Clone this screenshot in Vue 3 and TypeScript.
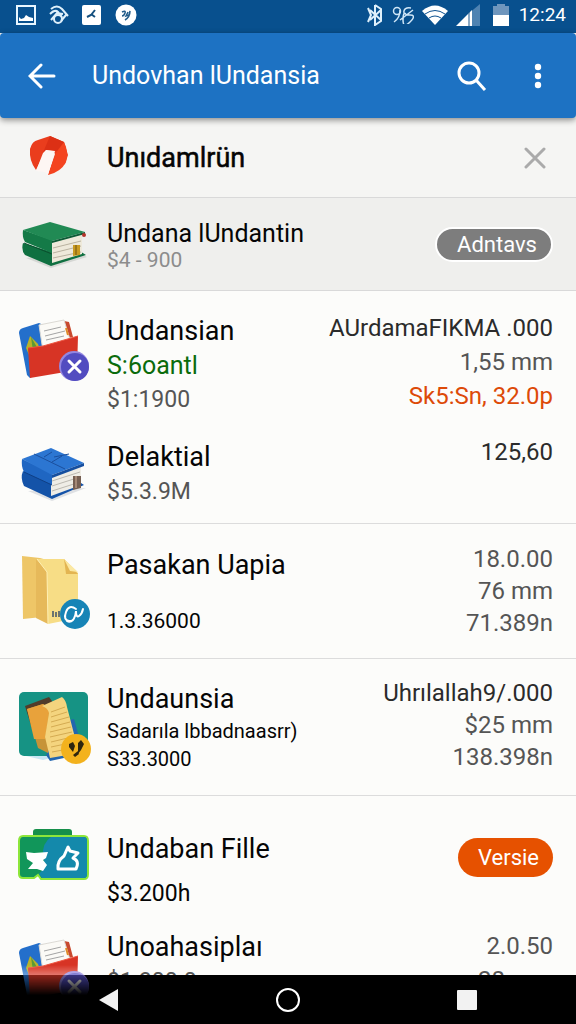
<script setup lang="ts">
interface Line {
  text: string
  tone: string
}
interface Entry {
  id: string
  icon: string
  title: string
  lines: Line[]
  values: Line[]
  action?: string
}

const entries: Entry[] = [
  {
    id: 'files',
    icon: 'files',
    title: 'Undansian',
    lines: [
      { text: 'S:6oantl', tone: 'green' },
      { text: '$1:1900', tone: 'grey' },
    ],
    values: [
      { text: 'AUrdamaFIKMA .000', tone: 'dark' },
      { text: '1,55 mm', tone: 'grey' },
      { text: 'Sk5:Sn, 32.0p', tone: 'orange' },
    ],
  },
  {
    id: 'book',
    icon: 'book',
    title: 'Delaktial',
    lines: [{ text: '$5.3.9M', tone: 'grey' }],
    values: [{ text: '125,60', tone: 'dark' }],
  },
  {
    id: 'folder',
    icon: 'folder',
    title: 'Pasakan Uapia',
    lines: [{ text: '1.3.36000', tone: 'black' }],
    values: [
      { text: '18.0.00', tone: 'grey' },
      { text: '76 mm', tone: 'grey' },
      { text: '71.389n', tone: 'grey' },
    ],
  },
  {
    id: 'notes',
    icon: 'notes',
    title: 'Undaunsia',
    lines: [
      { text: 'Sadarıla lbbadnaasrr)', tone: 'black' },
      { text: 'S33.3000', tone: 'black' },
    ],
    values: [
      { text: 'Uhrılallah9/.000', tone: 'dark' },
      { text: '$25 mm', tone: 'grey' },
      { text: '138.398n', tone: 'grey' },
    ],
  },
  {
    id: 'case',
    icon: 'case',
    title: 'Undaban Fille',
    lines: [{ text: '$3.200h', tone: 'black' }],
    values: [],
    action: 'Versie',
  },
  {
    id: 'last',
    icon: 'files',
    title: 'Unoahasiplaı',
    lines: [{ text: '$1.300.0', tone: 'grey' }],
    values: [
      { text: '2.0.50', tone: 'grey' },
      { text: '28 mm', tone: 'grey' },
    ],
  },
]
</script>

<template>
  <div class="screen">
    <div class="status">
      <svg class="glyph" width="20" height="20" viewBox="0 0 20 20">
        <rect x="1" y="1" width="18" height="18" fill="none" stroke="#e8f6ff" stroke-width="2" />
        <path d="M3 16v-4l2 2 3-1 2-3 3 2 4 1v3z" fill="#fff" />
      </svg>
      <svg class="glyph" width="20" height="20" viewBox="0 0 20 20" fill="none" stroke="#dff0fb" stroke-width="2">
        <path d="M2 4q6-5 11 0l6 7M1 9q5-5 8-2l4 5M2 15l6-7 6 1M12 16l5-6" />
        <circle cx="9" cy="14" r="4" />
      </svg>
      <svg class="glyph" width="20" height="20" viewBox="0 0 20 20">
        <rect width="19" height="20" rx="2" fill="#fff" />
        <path d="M5 12l4-2 4-5M9 9l4 3" fill="none" stroke="#15507f" stroke-width="2" />
      </svg>
      <svg class="glyph" width="22" height="22" viewBox="0 0 22 22">
        <circle cx="11" cy="11" r="10.500" fill="#fff" />
        <path d="M7 8q4-2 3 1t-3 3M13 8l-2 4 3-1 1-4q0 6-5 9" fill="none" stroke="#235d8b" stroke-width="1.500" />
      </svg>
      <span class="push"></span>
      <svg class="glyph" width="18" height="22" viewBox="0 0 18 22" fill="none" stroke="#dff0fb" stroke-width="2">
        <path d="M9 1v20l6-4V5L9 1M4 6l11 10M4 16L15 6M2 4l3 7-3 7" />
      </svg>
      <svg class="glyph" width="22" height="18" viewBox="0 0 22 18" fill="none" stroke="#cfe6f7" stroke-width="1.500">
        <circle cx="5" cy="5" r="3.500" />
        <path d="M8 4Q8 12 2 16M19 2q-6-1-7 3t6 4 0 7-7-2 3-6M21 4L8 14" />
      </svg>
      <svg class="glyph" width="26" height="20" viewBox="0 0 26 20">
        <path d="M0 6Q13-5 26 6L13 20z" fill="#fff" />
        <path d="M3 9q10-7 20 0M7 13q6-4 12 0" fill="none" stroke="#0d5190" stroke-width="1" />
      </svg>
      <svg class="glyph" width="24" height="22" viewBox="0 0 24 22">
        <path d="M12 10L24 0v22H12z" fill="#4f83b2" />
        <path d="M0 22L16 6v16z" fill="#fff" />
        <path d="M13 8v14" stroke="#17548c" stroke-width="1" />
      </svg>
      <svg class="glyph battery" width="16" height="22" viewBox="0 0 16 22">
        <path d="M0 2h4V0h8v2h4v9H0z" fill="#6f96bd" />
        <path d="M0 11h16v11H0z" fill="#fff" />
      </svg>
      <span class="clock">12:24</span>
    </div>

    <header class="bar">
      <button class="tap" aria-label="Back">
        <svg width="28" height="26" viewBox="0 0 28 26" fill="none" stroke="#fff" stroke-width="3" stroke-linecap="round">
          <path d="M13 2L2 13l11 11M3 13h23" />
        </svg>
      </button>
      <h1>Undovhan lUndansia</h1>
      <button class="tap" aria-label="Search">
        <svg width="30" height="30" viewBox="0 0 30 30" fill="none" stroke="#fff" stroke-width="3">
          <circle cx="12" cy="12" r="10" />
          <path d="M19 19l9 10" />
        </svg>
      </button>
      <button class="tap" aria-label="More">
        <svg width="8" height="26" viewBox="0 0 8 26" fill="#fff">
          <circle cx="4" cy="4" r="3.200" />
          <circle cx="4" cy="13" r="3.200" />
          <circle cx="4" cy="22" r="3.200" />
        </svg>
      </button>
    </header>

    <main>
      <section class="notice">
        <svg class="icon" viewBox="0 0 72 72">
          <path d="M12 27Q14 19 20 18L32 14 46 20 50 33 47 42 30 53 37 32 35 29 28 28 18 48Q11 39 12 27z" fill="#ea3d1d" />
          <path d="M46 20Q51 30 48 40 43 50 30 53L38 31z" fill="#f4441f" />
          <path d="M32 14L46 20 39 29 28 28 24 33z" fill="#dc3015" />
          <path d="M25 31L28 28 37 29 30 53 27 50 18 49z" fill="#fdf6f3" />
        </svg>
        <h2>Unıdamlrün</h2>
        <button class="close" aria-label="Close">
          <svg width="22" height="22" viewBox="0 0 22 22" stroke="#aaa" stroke-width="3" stroke-linecap="round">
            <path d="M2 2l18 18M20 2L2 20" />
          </svg>
        </button>
      </section>

      <section class="notice featured">
        <svg class="icon" viewBox="0 0 72 72">
          <path d="M8 50L33 60 69 49 60 44z" fill="#d5d7d4" />
          <path d="M5 35L34 44 60 42 68 47 33 58 7 47Q3 42 5 35z" fill="#0f7041" />
          <path d="M34 34L64 26V46L34 55z" fill="#eee9da" />
          <path d="M35 40l28-7M35 45l28-7M35 50l28-6" stroke="#b9b29f" stroke-width="1" />
          <path d="M5 22L34 32V45L7 34Q4 29 5 22z" fill="#147a47" />
          <path d="M6 35L34 46" stroke="#0a4f2d" stroke-width="1" />
          <path d="M5 22L32 14 67 24 34 33z" fill="#218a54" />
          <path d="M34 33L67 24v2L34 35z" fill="#0d5b36" />
          <circle cx="66" cy="27" r="2" fill="#b4332a" />
          <path d="M55 37h7v10l-7 1z" fill="#c99a20" />
          <path d="M58 37v10" stroke="#6f520f" stroke-width="1" />
        </svg>
        <div class="text">
          <h3>Undana lUndantin</h3>
          <p>$4 - 900</p>
        </div>
        <button class="pill muted">Adntavs</button>
      </section>

      <ul class="list">
        <li v-for="entry in entries" :key="entry.id" :class="['row', entry.id]">
          <svg v-if="entry.icon === 'files'" class="icon" viewBox="0 0 72 72">
            <path d="M1 24Q1 20 5 19L21 14 34 20 28 60 12 69 9 66z" fill="#246fcb" />
            <path d="M8 39L12 27 20 35 22 41 11 46z" fill="#b9b32a" />
            <path d="M13 28l7 12-5 2z" fill="#5a9a35" />
            <path d="M46 12L51 13 55 28 46 30z" fill="#c8492e" />
            <path d="M21 16L46 11 53 34 25 42z" fill="#fbfaf6" stroke="#dcdad4" stroke-width="1" />
            <path d="M26 22l17-4M27 27l20-5M28 31l18-4" stroke="#a4a4a4" stroke-width="1" />
            <path d="M48 19l2 7" stroke="#e08a28" stroke-width="2" />
            <path d="M10 39L25 37 60 27 59 61 12 69z" fill="#d73425" />
            <path d="M10 39L25 37 60 27" fill="none" stroke="#ee5540" stroke-width="1" />
            <circle cx="56" cy="57" r="15" fill="#9386e0" />
            <circle cx="57" cy="58" r="14" fill="#524cc0" />
            <path d="M51 52l11 11M62 52L51 63" stroke="#fff" stroke-width="3" stroke-linecap="round" />
          </svg>
          <svg v-else-if="entry.icon === 'book'" class="icon" viewBox="0 0 72 72">
            <path d="M10 56L34 66 68 53z" fill="#dfe1e4" />
            <path d="M5 36L33 48 60 46 66 50 34 64 6 51Q2 43 5 36z" fill="#1453a8" />
            <path d="M33 41L63 30V50L33 61z" fill="#efede6" />
            <path d="M34 46l28-9M34 51l28-9M34 56l28-9" stroke="#bcb9b1" stroke-width="1" />
            <path d="M4 24L34 38V50L6 37Q3 31 4 24z" fill="#1f66c2" />
            <path d="M6 37L34 50" stroke="#0f3f85" stroke-width="1" />
            <path d="M4 24L33 13 66 28 34 40z" fill="#2c76d2" />
            <path d="M16 19L47 34M26 22l8-5M36 22l15-3M34 27l10-6" stroke="#1b4f9d" stroke-width="1" fill="none" />
            <path d="M34 40L66 28v3L34 43z" fill="#164f9f" />
            <path d="M55 41h8v12l-8 2z" fill="#765f52" />
            <path d="M58 41v12" stroke="#d4b49b" stroke-width="1" />
          </svg>
          <svg v-else-if="entry.icon === 'folder'" class="icon" viewBox="0 0 72 72">
            <path d="M4 13L22 15 40 20 24 74 5 76z" fill="#eec667" />
            <path d="M18 16L30 29 30 81 18 75z" fill="#e6b95a" />
            <path d="M19 16H46L60 30V75L30 81 29 29z" fill="#f7dd86" />
            <path d="M19 16L29 29 30 81" fill="none" stroke="#fff0b4" stroke-width="1" />
            <path d="M46 16L60 31H48z" fill="#e3b552" />
            <path d="M46 16L60 29 52 28z" fill="#fbe8a3" />
            <path d="M35 68v6M38 69v5M41 68v6" stroke="#6b7470" stroke-width="2" />
            <circle cx="57" cy="71" r="15" fill="#1784b6" />
            <path d="M58 66Q51 61 48 69T51 78 58 68Q58 75 61 73T65 66M49 78q3 2 6-1" fill="none" stroke="#fff" stroke-width="2" stroke-linecap="round" />
          </svg>
          <svg v-else-if="entry.icon === 'notes'" class="icon" viewBox="0 0 72 72">
            <path d="M8 79H40L25 83z" fill="#c8e6f3" />
            <rect x="1" y="15" width="69" height="64" rx="5" fill="#169384" />
            <path d="M52 43L56 42 61 60 60 78 32 84 28 78z" fill="#2266b0" />
            <path d="M7 29L31 20 34 24 30 70 17 61z" fill="#513c2a" />
            <path d="M9 32L25 27 34 32 30 76 20 71z" fill="#c69338" />
            <path d="M9 32L25 27Q33 31 31 36L27 62 16 62z" fill="#e8a23b" />
            <path d="M24 29L44 20Q48 23 49 30L61 76 32 81 27 60 31 36Q30 31 24 29z" fill="#f4d47e" />
            <path d="M33 35l14-5M33 40l16-5M33 45l18-5M33 50l19-5M32 55l21-5M32 60l22-5M33 65l21-5M33 70l19-4M34 75l16-3" stroke="#d4ab52" stroke-width="1" />
            <circle cx="58" cy="72" r="15" fill="#f3b21d" />
            <path d="M51 67l4-2 2 4-2 6-4-5zM60 66l3-3 3 4-3 6-3 4zM55 78l5-4 1 3-4 3z" fill="#2e250f" />
          </svg>
          <svg v-else class="icon" viewBox="0 0 72 72">
            <rect x="15" y="2" width="39" height="18" rx="3" fill="#168f4a" />
            <path d="M5 9H66Q70 9 70 14V47Q70 52 66 52H23L20 48 16 51H5Q1 51 1 47V14Q1 9 5 9z" fill="#11965a" stroke="#8de63a" stroke-width="2" />
            <path d="M33 10H66Q69 10 69 14V47Q69 51 66 51H24L21 47Q29 40 25 29 24 16 33 10z" fill="#1489ab" />
            <path d="M8 25L16 26 30 25 28 31 25 33 29 38 25 44 19 42 10 42 15 36 9 32z" fill="#fff" />
            <path d="M50 20L46 29Q39 34 40 42H58Q62 34 55 31L60 26 52 24z" fill="none" stroke="#fff" stroke-width="3" stroke-linejoin="round" />
          </svg>

          <div class="text">
            <h3>{{ entry.title }}</h3>
            <p v-for="line in entry.lines" :key="line.text" :class="line.tone">{{ line.text }}</p>
          </div>
          <div v-if="entry.values.length" class="values">
            <p v-for="value in entry.values" :key="value.text" :class="value.tone">{{ value.text }}</p>
          </div>
          <button v-if="entry.action" class="pill">{{ entry.action }}</button>
        </li>
      </ul>
    </main>

    <nav class="nav">
      <button class="tap" aria-label="Back">
        <svg width="20" height="22" viewBox="0 0 20 22"><path d="M19 0v22L0 11z" fill="#f2f2f2" /></svg>
      </button>
      <button class="tap" aria-label="Home">
        <svg width="24" height="24" viewBox="0 0 24 24"><circle cx="12" cy="12" r="11" fill="none" stroke="#fff" stroke-width="2" /></svg>
      </button>
      <button class="tap" aria-label="Recent">
        <svg width="20" height="20" viewBox="0 0 20 20"><rect width="20" height="20" rx="1" fill="#f2f2f2" /></svg>
      </button>
    </nav>
  </div>
</template>

<style>
body {
  margin: 0;
}
</style>

<style scoped>
.screen {
  height: 100vh;
  overflow: hidden;
  display: flex;
  flex-direction: column;
  background: #fcfcfa;
  color: #050505;
  font-family: Roboto, "Liberation Sans", sans-serif;
}
h1, h2, h3, p, ul {
  margin: 0;
  padding: 0;
  font-weight: 400;
}
button {
  margin: 0;
  padding: 0;
  border: 0;
  background: none;
  font: inherit;
  color: inherit;
}
svg {
  display: block;
}
.status {
  flex: none;
  display: flex;
  align-items: center;
  gap: 13px;
  height: 33px;
  box-sizing: border-box;
  padding: 0 10px 3px 16px;
  background: #08508e;
  color: #fff;
}
.glyph {
  flex: none;
}
.push {
  flex: 1;
}
.push ~ .glyph {
  margin-right: -5px;
}
.push ~ .battery {
  margin: 0 -3px 0 5px;
}
.clock {
  font-size: 19px;
  line-height: 24px;
}
.bar {
  flex: none;
  position: relative;
  display: flex;
  align-items: center;
  height: 85px;
  padding: 0 14px 0 18px;
  background: #1d72c3;
  color: #fff;
  border-radius: 4px;
  box-shadow: 0 2px 6px rgba(0, 0, 0, 0.45);
}
.tap {
  display: grid;
  place-items: center;
  width: 48px;
  height: 48px;
}
.bar h1 {
  flex: 1;
  padding-left: 26px;
  font-size: 25px;
  line-height: 36px;
}
.bar .tap + .tap {
  margin-left: 18px;
}
.notice {
  display: flex;
  align-items: center;
  box-sizing: border-box;
  min-height: 80px;
  padding: 0 23px 0 18px;
  background: #f5f5f3;
  border-bottom: 1px solid #d9d9d9;
}
.notice.featured {
  min-height: 93px;
  background: #efefed;
}
.notice h2 {
  flex: 1;
  font-size: 27px;
  line-height: 36px;
  -webkit-text-stroke: 0.5px currentColor;
}
.featured h3 {
  font-size: 25px;
  line-height: 32px;
}
.featured p {
  font-size: 21px;
  line-height: 20px;
  color: #8c8c8c;
}
.icon {
  flex: none;
  width: 72px;
  height: 72px;
  margin-right: 17px;
  overflow: visible;
}
.close {
  padding: 7px;
}
.text {
  flex: 1;
  min-width: 0;
}
.pill {
  flex: none;
  min-width: 95px;
  height: 39px;
  padding: 0 14px 0 20px;
  border-radius: 20px;
  background: #e65100;
  color: #fff;
  font-size: 22px;
}
.pill.muted {
  height: 35px;
  min-width: 118px;
  border: 2px solid #fff;
  background: #7d7d7d;
}
.list {
  list-style: none;
}
.row {
  display: flex;
  align-items: flex-start;
  padding: 18px 23px 14px 18px;
}
.row .text {
  padding-top: 4px;
}
.row h3 {
  font-size: 27px;
  line-height: 36px;
  white-space: nowrap;
}
.row p {
  font-size: 23px;
  line-height: 34px;
  white-space: nowrap;
}
.values {
  text-align: right;
}
.row .values p {
  font-size: 24px;
}
.book,
.folder,
.notes {
  border-bottom: 1px solid #dcdcdc;
}
.files {
  padding-bottom: 0;
}
.files .values {
  padding-top: 2px;
}
.folder {
  padding-top: 19px;
  padding-bottom: 19px;
}
.folder .text p {
  padding-top: 21px;
  font-size: 21px;
}
.folder .values p,
.notes .values p {
  line-height: 32px;
}
.notes {
  padding-top: 18px;
  padding-bottom: 22px;
}
.notes .text .black {
  font-size: 20px;
  line-height: 28px;
}
.case {
  padding-top: 31px;
  padding-bottom: 0;
}
.case .text p {
  padding-top: 10px;
}
.case .pill {
  margin-top: 11px;
}
.last {
  padding-top: 14px;
}
.last .icon {
  position: relative;
  z-index: 2;
  margin-top: 4px;
  mask-image: linear-gradient(#000 50%, transparent 92%);
}
.last .values {
  padding-top: 4px;
}
.row .green {
  font-size: 25px;
  color: #0b6b0b;
}
.grey {
  color: #555;
}
.dark {
  color: #2b2b2b;
}
.orange {
  color: #dd4a08;
}
.nav {
  position: fixed;
  left: 0;
  right: 0;
  bottom: 0;
  z-index: 1;
  display: flex;
  justify-content: space-between;
  padding: 1px 85px 0;
  background: #000;
}
</style>
